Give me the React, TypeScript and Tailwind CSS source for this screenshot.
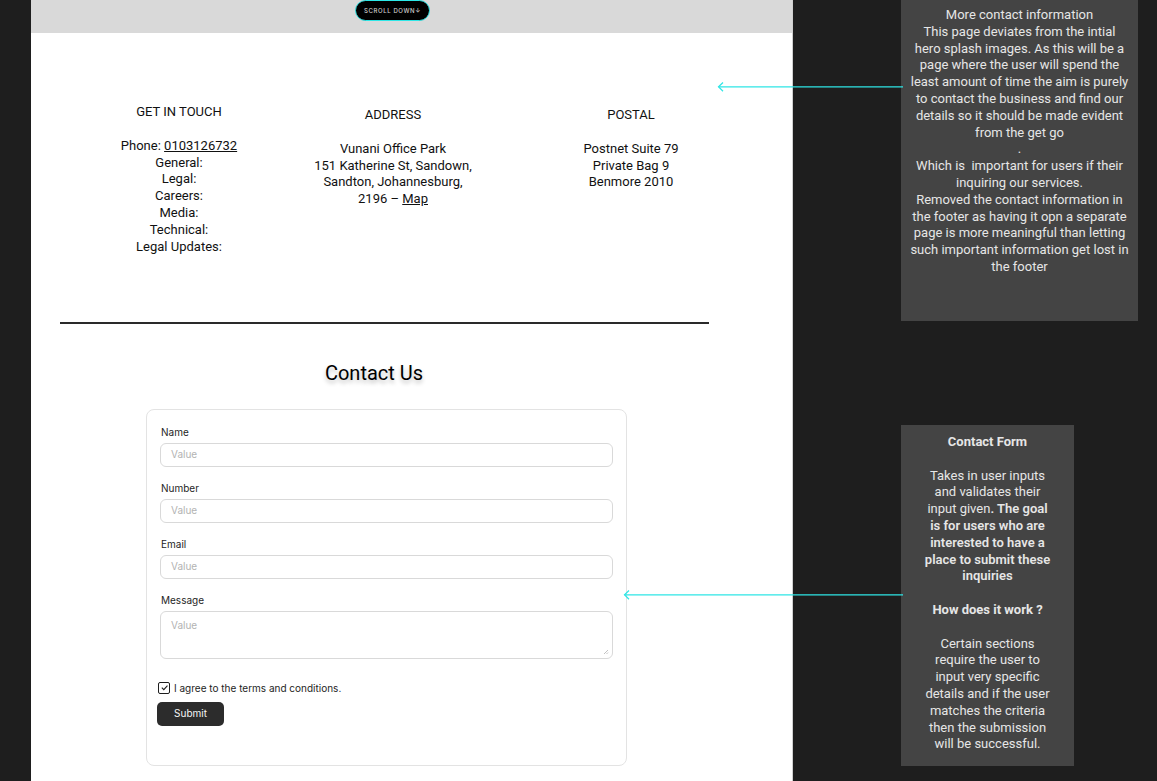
import React from "react";

const roboto = { fontFamily: "Roboto, 'Liberation Sans', sans-serif" };
const inter = { fontFamily: "Inter, 'Liberation Sans', sans-serif" };

function Field({ label, area }: { label: string; area?: boolean }) {
  return (
    <div className="mb-[15px] px-[3px]">
      <div className="ml-[1px] text-[10px] leading-[12px] text-[#1e1e1e] mb-[5px]">{label}</div>
      {area ? (
        <div className="relative h-[48px] rounded-[6px] border border-[#d9d9d9] bg-white px-[10px] pt-[7px] text-[10px] leading-[12px] text-[#b3b3b3]">
          Value
          <svg className="absolute right-[3px] bottom-[3px]" width="6" height="6" viewBox="0 0 6 6">
            <path d="M5 1 L1 5 M5 3.5 L3.5 5" stroke="#b3b3b3" strokeWidth="0.8" />
          </svg>
        </div>
      ) : (
        <div className="flex h-[24px] items-center rounded-[6px] border border-[#d9d9d9] bg-white px-[10px] text-[10px] text-[#b3b3b3]">
          Value
        </div>
      )}
    </div>
  );
}

export default function App() {
  const box1 = [
    "More contact information",
    "This page deviates from the intial",
    "hero splash images. As this will be a",
    "page where the user will spend the",
    "least amount of time the aim is purely",
    "to contact the business and find our",
    "details so it should be made evident",
    "from the get go",
    ".",
    "Which is  important for users if their",
    "inquiring our services.",
    "Removed the contact information in",
    "the footer as having it opn a separate",
    "page is more meaningful than letting",
    "such important information get lost in",
    "the footer",
  ];
  return (
    <div className="relative flex h-[781px] w-[1157px] overflow-hidden bg-[#1e1e1e]" style={roboto}>
      <div className="w-[31px] shrink-0" />
      {/* Frame */}
      <div className="flex w-[762px] shrink-0 flex-col bg-white border-r border-[#cfcfcf]">
        <div className="h-[33px] bg-[#d9d9d9]">
          <div
            className="ml-[324px] flex h-[21px] w-[75px] items-center justify-center rounded-full border border-[#2ee6e6] bg-black text-[6px] font-medium tracking-[0.6px] text-[#d0d0d0]"
            style={inter}
          >
            SCROLL DOWN↓
          </div>
        </div>

        {/* Info section */}
        <div className="flex h-[289px] pt-[71px] text-[13px] leading-[16.8px] text-[#111]">
          <div className="ml-[48px] w-[200px] text-center">
            <div className="mb-[17px]">GET IN TOUCH</div>
            <div>
              Phone: <span className="underline">0103126732</span>
            </div>
            <div>General:</div>
            <div>Legal:</div>
            <div>Careers:</div>
            <div>Media:</div>
            <div>Technical:</div>
            <div>Legal Updates:</div>
          </div>
          <div className="ml-[14px] w-[200px] pt-[3px] text-center">
            <div className="mb-[17px]">ADDRESS</div>
            <div>Vunani Office Park</div>
            <div className="whitespace-nowrap">151 Katherine St, Sandown,</div>
            <div>Sandton, Johannesburg,</div>
            <div>
              2196 – <span className="underline">Map</span>
            </div>
          </div>
          <div className="ml-[38px] w-[200px] pt-[3px] text-center">
            <div className="mb-[17px]">POSTAL</div>
            <div>Postnet Suite 79</div>
            <div>Private Bag 9</div>
            <div>Benmore 2010</div>
          </div>
        </div>

        <div className="ml-[29px] h-[1.5px] w-[649px] bg-[#2a2a2a]" />

        <div
          className="mt-[37px] w-[686px] text-center text-[20px] leading-[24px] text-black"
          style={{ textShadow: "0 3px 4px rgba(0,0,0,0.25)" }}
        >
          Contact Us
        </div>

        {/* Form card */}
        <div
          className="ml-[115px] mt-[24px] h-[357px] w-[481px] rounded-[8px] border border-[#e3e3e3] bg-white px-[10px] pt-[16px]"
          style={inter}
        >
          <Field label="Name" />
          <Field label="Number" />
          <Field label="Email" />
          <Field label="Message" area />
          <div className="mt-[23px] flex items-center">
            <div className="ml-[1px] flex h-[12px] w-[12px] items-center justify-center rounded-[2px] border border-[#1e1e1e]">
              <svg width="9" height="9" viewBox="0 0 10 10">
                <path d="M2 5.2 L4.2 7.4 L8.3 2.8" stroke="#1e1e1e" strokeWidth="1.2" fill="none" />
              </svg>
            </div>
            <span className="ml-[4px] text-[10px] leading-[12px] text-[#1e1e1e]">I agree to the terms and conditions.</span>
          </div>
          <button className="mt-[8px] flex h-[24px] w-[67px] items-center justify-center rounded-[5px] bg-[#2c2c2c] text-[10px] text-[#f5f5f5]">
            Submit
          </button>
        </div>
      </div>

      {/* Right annotations */}
      <div className="flex flex-col pl-[108px]">
        <div className="h-[321px] w-[237px] bg-[#444444] pt-[7px] text-center text-[13px] leading-[16.8px] text-[#e6e6e6]">
          {box1.map((l, i) => (
            <div key={i} className="whitespace-pre">
              {l}
            </div>
          ))}
        </div>
        <div className="mt-[104px] h-[341px] w-[173px] bg-[#444444] pt-[9px] text-center text-[13px] leading-[16.8px] text-[#e6e6e6]">
          <div className="font-bold">Contact Form</div>
          <div className="h-[16.8px]" />
          <div>Takes in user inputs</div>
          <div>and validates their</div>
          <div>
            input given<span className="font-semibold">. The goal</span>
          </div>
          <div className="font-semibold">is for users who are</div>
          <div className="font-semibold">interested to have a</div>
          <div className="font-semibold">place to submit these</div>
          <div className="font-semibold">inquiries</div>
          <div className="h-[16.8px]" />
          <div className="font-bold">How does it work ?</div>
          <div className="h-[16.8px]" />
          <div>Certain sections</div>
          <div>require the user to</div>
          <div>input very specific</div>
          <div>details and if the user</div>
          <div>matches the criteria</div>
          <div>then the submission</div>
          <div>will be successful.</div>
        </div>
      </div>

      {/* Connector arrows */}
      <svg className="pointer-events-none absolute left-0 top-0" width="1157" height="781">
        <g stroke="#2ee6e6" strokeWidth="1.2" fill="none">
          <path d="M718.5 86.8 L903 86.8" />
          <path d="M723 82.5 L718.5 86.8 L723 91.2" />
          <path d="M624.5 594.8 L903 594.8" />
          <path d="M629 590.5 L624.5 594.8 L629 599.2" />
        </g>
      </svg>
    </div>
  );
}
